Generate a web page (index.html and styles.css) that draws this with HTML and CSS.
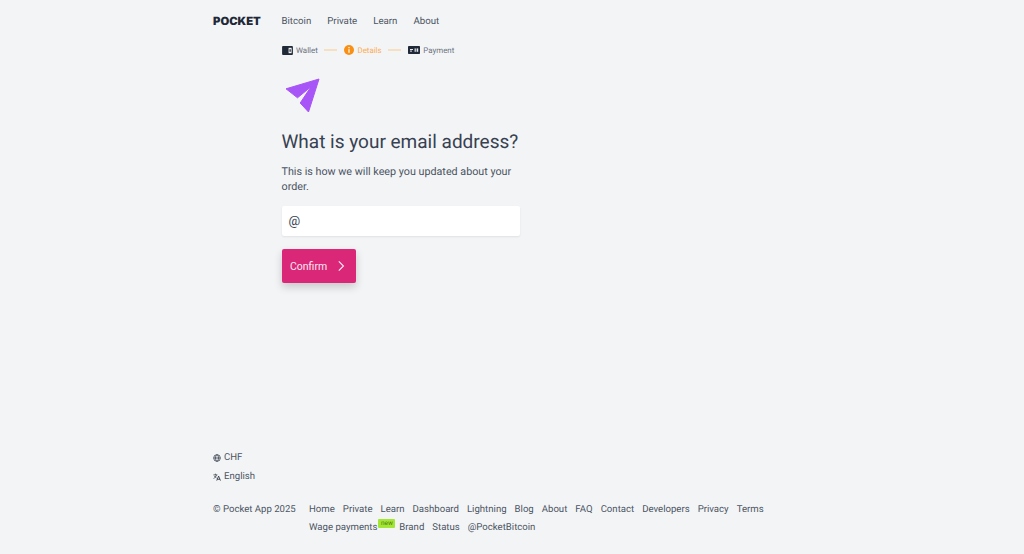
FILE: index.html
```html
<!DOCTYPE html>
<html lang="en">
<head>
<meta charset="utf-8">
<title>Pocket</title>
<link rel="stylesheet" href="styles.css">
</head>
<body>
<div class="page">
  <header class="topbar">
    <a class="logo">POCKET</a>
    <nav class="mainnav">
      <a>Bitcoin</a><a>Private</a><a>Learn</a><a>About</a>
    </nav>
  </header>
  <main class="content">
    <ol class="steps">
      <li class="step">
        <svg class="stepicon" viewBox="0 0 12 10"><rect width="12" height="10" rx="1" fill="#1f2937"/><rect x="7.2" y="2" width="3.4" height="6" fill="#f3f4f6"/><rect x="8.2" y="3.6" width="1.4" height="2.8" fill="#1f2937"/></svg>
        <span>Wallet</span>
      </li>
      <li class="line"></li>
      <li class="step current">
        <svg class="stepdot" viewBox="0 0 10 10"><circle cx="5" cy="5" r="5" fill="#f98f14"/><rect x="4.4" y="2" width="1.2" height="1.3" fill="#fff"/><rect x="4.4" y="4.2" width="1.2" height="3.6" fill="#fff"/></svg>
        <span>Details</span>
      </li>
      <li class="line"></li>
      <li class="step">
        <svg class="stepicon wide" viewBox="0 0 12 8"><rect width="12" height="8" rx="0.8" fill="#1f2937"/><rect x="2" y="3" width="3" height="1" fill="#e5e7eb"/><rect x="2" y="4.6" width="2" height="1" fill="#e5e7eb"/><rect x="6.6" y="2.4" width="1.2" height="3.4" fill="#e5e7eb"/><rect x="8.6" y="2.4" width="1.6" height="3.4" fill="#e5e7eb"/></svg>
        <span>Payment</span>
      </li>
    </ol>
    <svg class="plane" viewBox="0 0 36 36"><path d="M34 1 L1 10.8 L12.5 19.8 L26 8.7 L15.2 25 L23.5 34 Z" fill="#a855f7" stroke="#a855f7" stroke-width="1" stroke-linejoin="round"/></svg>
    <h1 class="title">What is your email address?</h1>
    <p class="lead">This is how we will keep you updated about your order.</p>
    <label class="field">
      <span class="at">@</span>
      <input class="input" type="email">
    </label>
    <button class="confirm" type="button">
      <span>Confirm</span>
      <svg class="chev" viewBox="0 0 10 14"><path d="M2.8 2.4 L7.4 7 L2.8 11.6" fill="none" stroke="#fce7f3" stroke-width="1.2"/></svg>
    </button>
  </main>
  <footer class="footer">
    <div class="pref">
      <svg class="prefic" viewBox="0 0 12 12"><g fill="none" stroke="#1f2937" stroke-width="1"><circle cx="6" cy="6" r="5"/><ellipse cx="6" cy="6" rx="2.2" ry="5"/><path d="M1 6 H11"/></g></svg>
      <span>CHF</span>
    </div>
    <div class="pref">
      <svg class="prefic" viewBox="0 0 12 12"><path d="M0.6 2.8 H6.6 M3.6 1 V2.8 M5.2 2.8 C4.6 5.4 3 7 0.8 8.2 M2 4.4 C2.8 6 4 7 5.4 7.6" fill="none" stroke="#1f2937" stroke-width="1"/><path d="M5.6 11.4 L8.4 4.6 L11.2 11.4 M6.5 9.4 H10.3" fill="none" stroke="#1f2937" stroke-width="1.2"/></svg>
      <span>English</span>
    </div>
    <div class="legal">
      <span class="copy">© Pocket App 2025</span>
      <nav class="footlinks">
        <a>Home</a><a>Private</a><a>Learn</a><a>Dashboard</a><a>Lightning</a><a>Blog</a><a>About</a><a>FAQ</a><a>Contact</a><a>Developers</a><a>Privacy</a><a>Terms</a>
        <a class="wage">Wage payments<span class="new">new</span></a><a>Brand</a><a>Status</a><a>@PocketBitcoin</a>
      </nav>
    </div>
  </footer>
</div>
</body>
</html>
```
FILE: styles.css
```css
* { box-sizing: border-box; }
html, body { margin: 0; padding: 0; height: 100%; }
body {
  background: #f3f4f6;
  color: #374151;
  font-family: "Roboto", "Noto Sans", sans-serif;
  text-rendering: geometricPrecision;
  overflow: hidden;
}
.page {
  width: 598px;
  height: 554px;
  margin: 0 auto;
  display: flex;
  flex-direction: column;
}
.topbar {
  display: flex;
  align-items: center;
  height: 42px;
  gap: 20.5px;
}
.logo {
  font-family: "Inter", sans-serif;
  font-weight: 900;
  font-size: 11.3px;
  color: #1f2937;
}
.mainnav { display: flex; gap: 16px; font-size: 9.7px; color: #4b5563; }
.content {
  flex: 1;
  padding-left: 68.5px;
  display: flex;
  flex-direction: column;
  align-items: flex-start;
}
.steps {
  list-style: none;
  margin: 0;
  padding: 0;
  height: 16px;
  display: flex;
  align-items: center;
  font-size: 7.9px;
  color: #6b7280;
}
.step { display: flex; align-items: center; gap: 3.5px; }
.step.current { color: #fbac55; }
.stepicon { width: 11px; height: 9px; }
.stepicon.wide { width: 12px; height: 8px; }
.stepdot { width: 10px; height: 10px; }
.line { width: 13px; height: 2px; margin: 0 6.6px; border-top: 1px solid #fbc98e; transform: translateY(0.5px); }
.plane { width: 36px; height: 36px; margin: 20px 0 0 3.5px; }
.title {
  margin: 15px 0 0;
  font-size: 19px;
  line-height: 26px;
  font-weight: 400;
  color: #374151;
}
.lead {
  margin: 9px 0 0;
  width: 240px;
  font-size: 10.75px;
  line-height: 15px;
  color: #4b5563;
}
.field {
  margin-top: 12px;
  width: 238.5px;
  height: 30px;
  background: #fff;
  border-radius: 2px;
  box-shadow: 0 1px 2px rgba(0,0,0,.08);
  display: flex;
  align-items: center;
  padding-left: 7px;
}
.at { font-size: 13px; color: #374151; }
.input { flex: 1; border: 0; background: transparent; outline: 0; min-width: 0; }
.confirm {
  margin-top: 13px;
  width: 74px;
  height: 34px;
  padding: 0 10px 0 8.5px;
  border: 0;
  border-radius: 2px;
  background: #db2777;
  color: #fce7f3;
  font: inherit;
  font-size: 10.5px;
  display: flex;
  align-items: center;
  justify-content: space-between;
  box-shadow: 0 4px 8px rgba(0,0,0,.18);
}
.chev { width: 10px; height: 14px; }
.footer { padding-bottom: 17px; font-size: 9.6px; color: #4b5563; }
.pref { display: flex; align-items: center; gap: 3px; height: 19px; }
.prefic { width: 8px; height: 8px; }
.legal { display: flex; margin-top: 15px; }
.copy { width: 96px; flex: none; line-height: 18px; }
.footlinks { display: flex; flex-wrap: wrap; column-gap: 8px; line-height: 18px; }
.wage { margin-right: -4px; }
.new {
  display: inline-block;
  vertical-align: top;
  margin: 0 0 0 1px;
  height: 9px;
  padding: 0 2.5px;
  background: #a3e635;
  border-radius: 1px;
  font-size: 6.5px;
  line-height: 8px;
  color: #4d7c0f;
}
```
